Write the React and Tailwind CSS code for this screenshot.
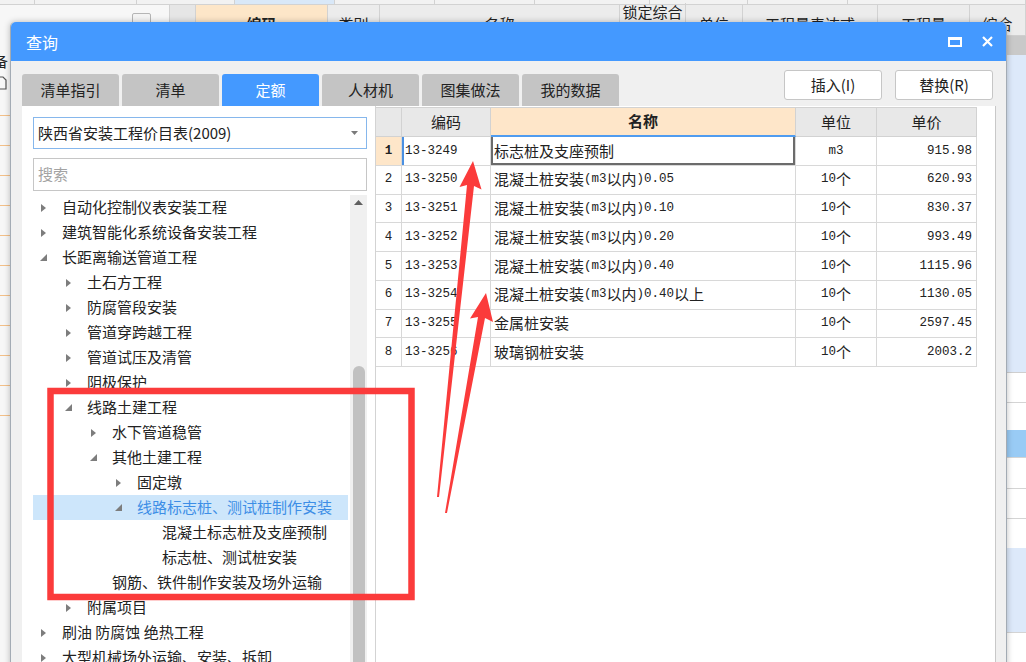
import React from 'react'

const tree = [
  { l: 0, a: 'r', t: '自动化控制仪表安装工程' },
  { l: 0, a: 'r', t: '建筑智能化系统设备安装工程' },
  { l: 0, a: 'd', t: '长距离输送管道工程' },
  { l: 1, a: 'r', t: '土石方工程' },
  { l: 1, a: 'r', t: '防腐管段安装' },
  { l: 1, a: 'r', t: '管道穿跨越工程' },
  { l: 1, a: 'r', t: '管道试压及清管' },
  { l: 1, a: 'r', t: '阴极保护' },
  { l: 1, a: 'd', t: '线路土建工程' },
  { l: 2, a: 'r', t: '水下管道稳管' },
  { l: 2, a: 'd', t: '其他土建工程' },
  { l: 3, a: 'r', t: '固定墩' },
  { l: 3, a: 'd', t: '线路标志桩、测试桩制作安装', sel: true },
  { l: 4, t: '混凝土标志桩及支座预制' },
  { l: 4, t: '标志桩、测试桩安装' },
  { l: 2, t: '钢筋、铁件制作安装及场外运输' },
  { l: 1, a: 'r', t: '附属项目' },
  { l: 0, a: 'r', t: '刷油 防腐蚀 绝热工程' },
  { l: 0, a: 'r', t: '大型机械场外运输、安装、拆卸' },
]

const indent = ['pl-[7px]', 'pl-[32px]', 'pl-[57px]', 'pl-[82px]', 'pl-[107px]']

const rows = [
  { n: '1', code: '13-3249', name: '标志桩及支座预制', unit: 'm3', price: '915.98' },
  { n: '2', code: '13-3250', name: '混凝土桩安装(m3以内)0.05', unit: '10个', price: '620.93' },
  { n: '3', code: '13-3251', name: '混凝土桩安装(m3以内)0.10', unit: '10个', price: '830.37' },
  { n: '4', code: '13-3252', name: '混凝土桩安装(m3以内)0.20', unit: '10个', price: '993.49' },
  { n: '5', code: '13-3253', name: '混凝土桩安装(m3以内)0.40', unit: '10个', price: '1115.96' },
  { n: '6', code: '13-3254', name: '混凝土桩安装(m3以内)0.40以上', unit: '10个', price: '1130.05' },
  { n: '7', code: '13-3255', name: '金属桩安装', unit: '10个', price: '2597.45' },
  { n: '8', code: '13-3256', name: '玻璃钢桩安装', unit: '10个', price: '2003.2' },
]

const tabs = ['清单指引', '清单', '定额', '人材机', '图集做法', '我的数据']

// background grid behind the dialog
const topCells = ['w-[35px]', 'w-[102px]', 'w-[98px]', 'w-[100px] bg-[#d9e8f8]', 'w-[100px]', 'w-[100px]', 'w-[115px]', 'w-[98px]', 'w-[100px]', 'flex-1']

const backHead = [
  { w: 'w-[26px] bg-[#e6e6e6]', t: '' },
  { w: 'w-[132px] bg-[#fde6c8] font-bold', t: '编码' },
  { w: 'w-[52px]', t: '类别' },
  { w: 'w-[240px]', t: '名称' },
  { w: 'w-[66px]', t: '锁定综合', top: true },
  { w: 'w-[57px]', t: '单位' },
  { w: 'w-[135px]', t: '工程量表达式' },
  { w: 'w-[92px]', t: '工程量' },
  { w: 'flex-1', t: '综合' },
]

const backRows = [
  'h-[19px] bg-[#c9c9c9]',
  'h-[318px] bg-[#dde9fa] border-b border-[#cfcfcf]',
  'h-[30px] bg-white border-b border-[#d4d4d4]',
  'h-[27px] bg-white',
  'h-[28px] bg-[#99cbf5] border-b border-[#d4d4d4]',
  'h-[31px] bg-white border-b border-[#d4d4d4]',
  'h-[30px] bg-white border-b border-[#d4d4d4]',
  'h-[29px] bg-white',
  'h-[85px] bg-[#dde9fa] border-b border-[#d4d4d4]',
  'flex-1 bg-white',
]

const Mixed = ({ text }) =>
  text.split(/([\x20-\x7e]+)/).filter(Boolean).map((s, i) =>
    /^[\x20-\x7e]+$/.test(s)
      ? <span key={i} className="font-['Liberation_Mono',monospace] text-[12.5px]">{s}</span>
      : <span key={i}>{s}</span>
  )

const BackApp = () => (
  <div className="absolute inset-0 flex flex-col bg-[#f7f7f7]">
    <div className="h-[5px] shrink-0 flex bg-[#f2f2f2] border-b border-[#d2d2d2]">
      {topCells.map((c, i) => <div key={i} className={`${c} border-r border-[#d2d2d2]`} />)}
    </div>
    <div className="flex flex-1 min-h-0">
      {/* left pane of the main app */}
      <div className="w-[170px] shrink-0 flex flex-col border-r border-[#d2d2d2]">
        <div className="h-[31px] flex justify-end pr-[18px] pt-[8px]">
          <div className="w-[19px] h-[19px] border border-[#b5b5b5] rounded-[2px] bg-[#f4f4f4] flex items-center justify-center text-[12px] text-[#888] leading-none">«</div>
        </div>
        <div className="pt-[16px] h-[38px] text-[15px] leading-[18px] -ml-[7px]">备</div>
        <div className="h-[20px] -ml-[4px] pt-[2px]">
          <svg width="11" height="14" viewBox="0 0 11 14"><path d="M1 1H7L10 4V13H1Z" fill="none" stroke="#555" strokeWidth="1.2" /></svg>
        </div>
        <div className="h-[22px] border-b border-[#f3c089]" />
        {[0, 1, 2, 3, 4, 5, 6, 7, 8, 9].map(i => <div key={i} className="h-[30px] border-b border-[#f3c089]" />)}
      </div>
      {/* main grid */}
      <div className="flex-1 flex flex-col">
        <div className="h-[31px] shrink-0 flex bg-[#ececec] border-b border-[#cfcfcf] text-[15px] text-[#222]">
          {backHead.map((h, i) => (
            <div key={i} className={`${h.w} border-r border-[#d2d2d2] flex justify-center whitespace-nowrap overflow-hidden ${h.top ? 'items-start leading-[17px] -mt-[2px]' : 'items-center pt-[8px]'}`}>{h.t}</div>
          ))}
        </div>
        {backRows.map((r, i) => <div key={i} className={r} />)}
      </div>
    </div>
  </div>
)

const Arrow = ({ open }) =>
  open ? (
    <svg width="7" height="7" viewBox="0 0 7 7"><path d="M7 0V7H0Z" fill="#7d7d7d" /></svg>
  ) : (
    <svg width="5" height="8" viewBox="0 0 5 8" className="ml-[1px]"><path d="M0 0L5 4L0 8Z" fill="#7d7d7d" /></svg>
  )

const LeftPanel = () => (
  <div className="w-[353px] shrink-0 bg-white pt-[11px] pl-[11px] flex flex-col">
    <div className="w-[334px] h-[32px] border border-[#86b7ec] flex items-center pl-[4px] pr-[8px] text-[15px] text-[#222]">
      <span>陕西省安装工程价目表(2009)</span>
      <svg className="ml-auto" width="7" height="4" viewBox="0 0 7 4"><path d="M0 0H7L3.5 4Z" fill="#7a7a7a" /></svg>
    </div>
    <div className="mt-[9px] w-[334px] h-[33px] border border-[#c6c6c6] flex items-center pl-[4px] text-[15px] text-[#a3a3a3]">搜索</div>
    <div className="mt-[4px] flex flex-1 min-h-0">
      <div className="w-[315px]">
        {tree.map((n, i) => (
          <div key={i} className={`h-[25px] flex items-center whitespace-nowrap text-[15px] ${indent[n.l]} ${n.sel ? 'bg-[#cde6fb] text-[#3d8ee6]' : 'text-[#222]'}`}>
            <div className="w-[22px] shrink-0 flex items-center">
              {n.a && <Arrow open={n.a === 'd'} />}
            </div>
            <span>{n.t}</span>
          </div>
        ))}
      </div>
      <div className="ml-[2px] w-[17px] bg-[#f0f0f0] flex flex-col items-center">
        <svg className="mt-[5px]" width="9" height="5" viewBox="0 0 9 5"><path d="M0 5L4.5 0L9 5Z" fill="#606060" /></svg>
        <div className="mt-[161px] w-[12px] flex-1 rounded-t-[6px] bg-[#c1c1c1]" />
      </div>
    </div>
  </div>
)

const RightPanel = () => (
  <div className="w-[620px] shrink-0 bg-white border-r border-[#c8c8c8] pt-[1px]">
    <div className="w-[601px] flex h-[30px] text-[15px] text-[#222]">
      <div className="w-[26px] bg-[#e8e8e8] border-y border-r border-[#d2d2d2]" />
      <div className="w-[89px] bg-[#e8e8e8] border-y border-r border-[#d2d2d2] flex items-center justify-center">编码</div>
      <div className="w-[305px] bg-[#fee6c9] border-t border-r border-[#d2d2d2] border-b-2 border-b-[#4f9cf0] flex items-center justify-center font-bold">名称</div>
      <div className="w-[81px] bg-[#e8e8e8] border-y border-r border-[#d2d2d2] flex items-center justify-center">单位</div>
      <div className="w-[100px] bg-[#e8e8e8] border-y border-r border-[#d2d2d2] flex items-center justify-center">单价</div>
    </div>
    {rows.map((r, i) => {
      const first = i === 0
      return (
        <div key={r.n} className="w-[601px] flex h-[28.75px] text-[15px] text-[#222] whitespace-nowrap">
          <div className={`w-[26px] border-r border-b border-[#d8d8d8] flex items-center justify-center font-['Liberation_Mono',monospace] text-[12.5px] ${first ? 'bg-[#fee6c9] font-bold' : 'bg-white'}`}>{r.n}</div>
          <div className={`w-[89px] border-r border-b border-[#d8d8d8] flex items-center pl-[3px] ${first ? 'shadow-[inset_2px_0_0_#4a90e2]' : ''}`}><Mixed text={r.code} /></div>
          <div className={`w-[305px] border-r border-b border-[#d8d8d8] flex items-center pl-[3px] ${first ? 'shadow-[inset_2px_0_0_#6b6b6b,inset_-2px_0_0_#6b6b6b,inset_0_-2px_0_#6b6b6b]' : ''}`}><Mixed text={r.name} /></div>
          <div className="w-[81px] border-r border-b border-[#d8d8d8] flex items-center justify-center"><Mixed text={r.unit} /></div>
          <div className="w-[100px] border-r border-b border-[#d8d8d8] flex items-center justify-end pr-[4px]"><Mixed text={r.price} /></div>
        </div>
      )
    })}
  </div>
)

const Dialog = () => (
  <div className="absolute left-[10px] top-[22px] w-[997px] h-[650px] flex flex-col bg-[#f0f0f0] border-x border-[#a3abb4] rounded-t-[5px] shadow-[0_0_6px_rgba(0,0,0,0.25)]">
    {/* title bar */}
    <div className="h-[39px] shrink-0 flex items-center bg-[#4499ff] rounded-t-[5px] pl-[15px] pr-[13px]">
      <span className="text-white text-[16px] leading-none">查询</span>
      <div className="ml-auto flex items-center gap-[20px]">
        <svg width="14" height="10" viewBox="0 0 14 10">
          <rect x="1" y="1.5" width="12" height="7.5" fill="none" stroke="#fff" strokeWidth="2" />
          <rect x="0" y="0" width="14" height="3" fill="#fff" />
        </svg>
        <svg width="11" height="11" viewBox="0 0 11 11">
          <path d="M1 1L10 10M10 1L1 10" stroke="#fff" strokeWidth="2.2" />
        </svg>
      </div>
    </div>

    {/* tabs + buttons */}
    <div className="h-[45px] shrink-0 flex justify-between pl-[11px] pr-[13px]">
      <div className="flex gap-[3px] self-end">
        {tabs.map(t => (
          <div key={t} className={`w-[97px] h-[32px] rounded-t-[3px] flex items-center justify-center text-[15px] ${t === '定额' ? 'bg-[#4499ff] text-white' : 'bg-[#c4c4c4] text-[#222]'}`}>{t}</div>
        ))}
      </div>
      <div className="flex gap-[13px] pt-[9px]">
        <button className="w-[98px] h-[30px] bg-white border border-[#c6c6c6] rounded-[3px] text-[15px] text-[#222]">插入(I)</button>
        <button className="w-[98px] h-[30px] bg-white border border-[#c6c6c6] rounded-[3px] text-[15px] text-[#222]">替换(R)</button>
      </div>
    </div>

    {/* body */}
    <div className="flex flex-1 min-h-0 pl-[11px]">
      <LeftPanel />
      <div className="w-px shrink-0 bg-[#d3d3d3]" />
      <RightPanel />
    </div>
  </div>
)

// red annotation marks on top of the screenshot
const Marks = () => (
  <svg className="absolute inset-0 pointer-events-none" width="1026" height="662" viewBox="0 0 1026 662">
    <rect x="50.5" y="391" width="361" height="206" fill="none" stroke="#fb3b3b" strokeWidth="6.5" />
    <path d="M437 497 L467 185 L459.5 187 L473 161 L481.5 189.5 L474 186 L439 497 Z" fill="#fb3b3b" />
    <path d="M445 513 L478 317 L470 318.5 L486 293 L493 322 L485 318 L447 513 Z" fill="#fb3b3b" />
  </svg>
)

export default function App() {
  return (
    <div className="relative w-[1026px] h-[662px] overflow-hidden bg-[#f7f7f7] text-[#222] font-['Noto_Sans_CJK_SC',sans-serif]">
      <BackApp />
      <Dialog />
      <Marks />
    </div>
  )
}
